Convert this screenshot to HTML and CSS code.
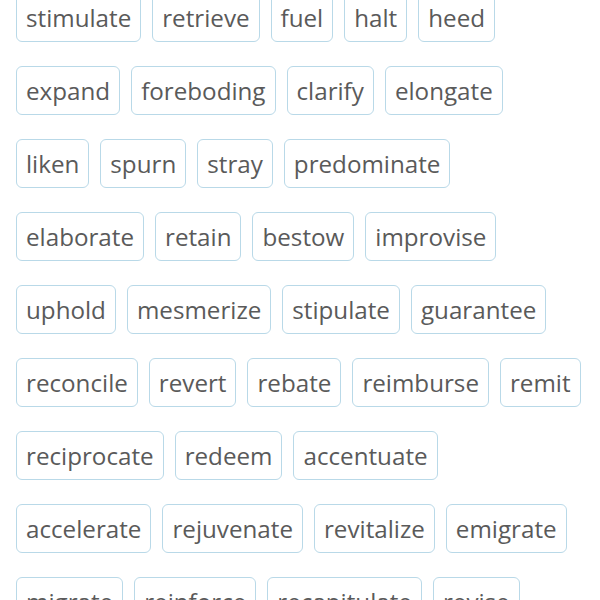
FILE: index.html
```html
<!DOCTYPE html>
<html>
<head>
<meta charset="utf-8">
<link rel="stylesheet" href="styles.css">
</head>
<body>
<div class="chips">
  <div class="row"><span class="chip">stimulate</span><span class="chip">retrieve</span><span class="chip">fuel</span><span class="chip">halt</span><span class="chip">heed</span></div>
  <div class="row"><span class="chip">expand</span><span class="chip">foreboding</span><span class="chip">clarify</span><span class="chip">elongate</span></div>
  <div class="row"><span class="chip">liken</span><span class="chip">spurn</span><span class="chip">stray</span><span class="chip">predominate</span></div>
  <div class="row"><span class="chip">elaborate</span><span class="chip">retain</span><span class="chip">bestow</span><span class="chip">improvise</span></div>
  <div class="row"><span class="chip">uphold</span><span class="chip">mesmerize</span><span class="chip">stipulate</span><span class="chip">guarantee</span></div>
  <div class="row"><span class="chip">reconcile</span><span class="chip">revert</span><span class="chip">rebate</span><span class="chip">reimburse</span><span class="chip">remit</span></div>
  <div class="row"><span class="chip">reciprocate</span><span class="chip">redeem</span><span class="chip">accentuate</span></div>
  <div class="row"><span class="chip">accelerate</span><span class="chip">rejuvenate</span><span class="chip">revitalize</span><span class="chip">emigrate</span></div>
  <div class="row"><span class="chip">migrate</span><span class="chip">reinforce</span><span class="chip">recapitulate</span><span class="chip">revise</span></div>
</div>
</body>
</html>
```
FILE: styles.css
```css
html, body {
  margin: 0;
  padding: 0;
  background: #ffffff;
  overflow: hidden;
}
.chips {
  display: flex;
  flex-direction: column;
  gap: 24px;
  padding: 0 16px;
  margin-top: -7px;
}
.row {
  display: flex;
  gap: 11px;
}
.chip {
  font-family: "Open Sans", sans-serif;
  font-size: 24.2px;
  line-height: 47px;
  height: 47px;
  color: #5a5a5a;
  border: 1px solid #b9d9e8;
  border-radius: 6px;
  padding: 0 9px;
  white-space: nowrap;
}
```
